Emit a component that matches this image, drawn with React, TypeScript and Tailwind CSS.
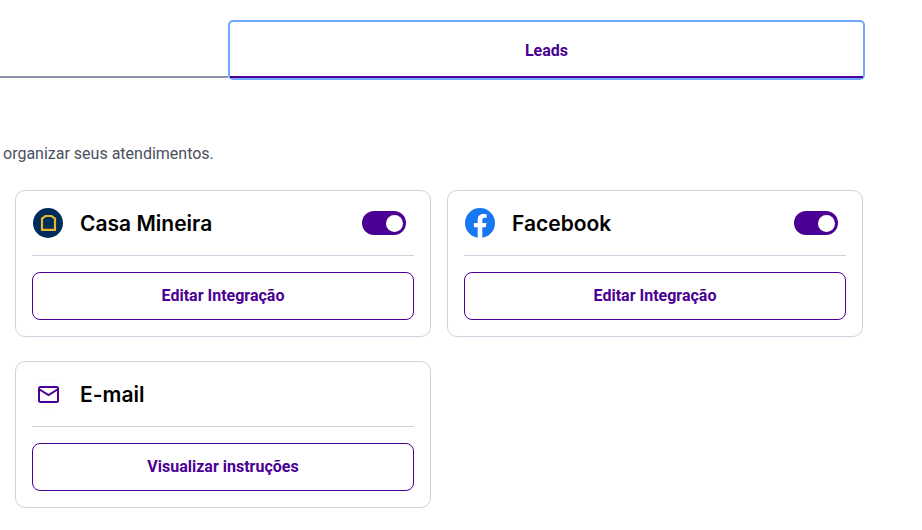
import React from 'react';

function Toggle() {
  return (
    <div className="flex h-6 w-11 items-center justify-end rounded-full bg-[#4b0095] pr-[3px]">
      <div className="h-[17px] w-[17px] rounded-full bg-white" />
    </div>
  );
}

function CasaIcon() {
  return (
    <svg width="30" height="30" viewBox="0 0 30 30">
      <circle cx="15" cy="15" r="15" fill="#002c5a" />
      <path d="M9 21.800V10.600L12.500 8h6l3.500 2.600v11.200z" fill="none" stroke="#e8b52f" strokeWidth="2.200" />
    </svg>
  );
}

function FacebookIcon() {
  return (
    <svg width="30" height="30" viewBox="0 0 30 30">
      <circle cx="15" cy="15" r="15" fill="#1877f2" />
      <path
        d="M20.800 19.300l.66-4.300h-4.140v-2.800c0-1.180.58-2.330 2.430-2.330h1.880V6.200s-1.700-.29-3.330-.29c-3.400 0-5.620 2.060-5.620 5.790V15H8.900v4.300h3.780v10.400a15 15 0 0 0 4.640 0V19.300z"
        fill="#fff"
      />
    </svg>
  );
}

function MailIcon() {
  return (
    <div className="flex h-[30px] w-[30px] items-center justify-center rounded-full border border-[#f6f6f8] bg-white">
      <svg width="21" height="17" viewBox="0 0 21 17" fill="none" stroke="#4b0095" strokeWidth="2">
        <rect x="1" y="1" width="19" height="15" rx="1.500" />
        <path d="M1.500 3.500l9 5.500 9-5.500" />
      </svg>
    </div>
  );
}

interface CardProps {
  icon: React.ReactNode;
  title: string;
  action: string;
  toggle?: boolean;
}

function Card({ icon, title, action, toggle = false }: CardProps) {
  return (
    <div className="h-[147px] rounded-[10px] border border-[#d0d0de] bg-white px-4 pt-[17px]">
      <div className="flex h-[30px] items-center pl-px">
        {icon}
        <span className="ml-[17px] pt-px font-['Inter',sans-serif] text-[21px] font-semibold text-black">
          {title}
        </span>
        {toggle && (
          <div className="mr-2 ml-auto">
            <Toggle />
          </div>
        )}
      </div>
      <div className="mt-[17px] h-px bg-[#d0d0de]" />
      <button className="mt-4 h-12 w-full rounded-lg border border-[#4b0095] bg-white pb-px text-base font-bold text-[#4b0095]">
        {action}
      </button>
    </div>
  );
}

export default function App() {
  return (
    <div className="h-[530px] w-[922px] overflow-hidden bg-white font-['Roboto',sans-serif]">
      <div className="flex pt-5">
        <div className="h-[58px] w-[228px] border-b-2 border-[#8c93a8]" />
        <div className="h-[60px] w-[637px] rounded-[5px] border-2 border-[#6ea8fe]">
          <div className="flex h-[56px] items-center justify-center border-b-2 border-[#4b0095] pt-1 text-base font-bold text-[#4b0095]">
            Leads
          </div>
        </div>
      </div>
      <p className="mt-[64px] pl-[3px] text-base leading-5 text-[#4a5060]">organizar seus atendimentos.</p>
      <div className="mt-[26px] ml-[15px] grid w-[848px] grid-cols-2 gap-x-4 gap-y-6">
        <Card icon={<CasaIcon />} title="Casa Mineira" action="Editar Integração" toggle />
        <Card icon={<FacebookIcon />} title="Facebook" action="Editar Integração" toggle />
        <Card icon={<MailIcon />} title="E-mail" action="Visualizar instruções" />
      </div>
    </div>
  );
}
